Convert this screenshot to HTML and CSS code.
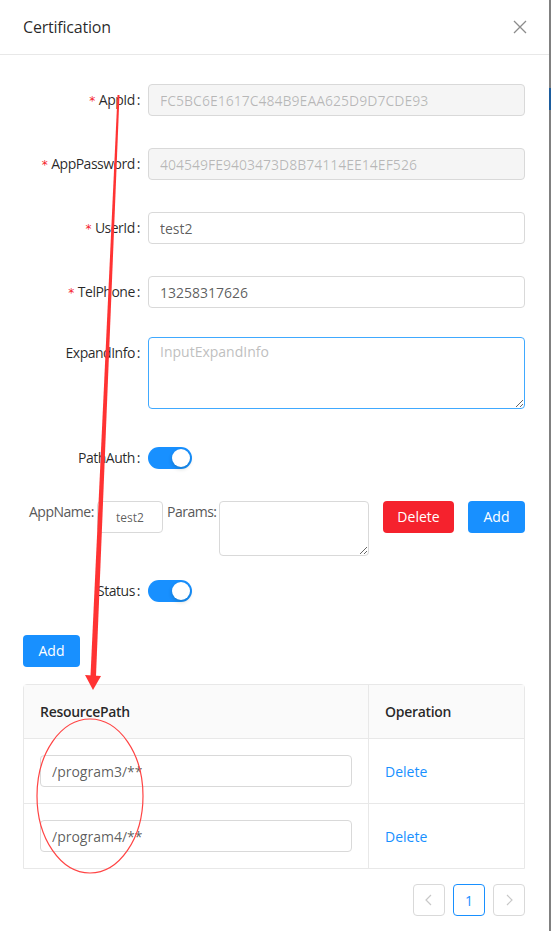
FILE: index.html
```html
<!DOCTYPE html>
<html>
<head>
<meta charset="utf-8">
<link rel="stylesheet" href="styles.css">
</head>
<body>
<div class="page">
  <div class="modal">
    <div class="modal-header">
      <div class="modal-title">Certification</div>
      <svg class="close" width="14" height="14" viewBox="0 0 14 14"><path d="M1 1L13 13M13 1L1 13" stroke="#8c8c8c" stroke-width="1.3" fill="none"/></svg>
    </div>
    <div class="modal-body">
      <div class="form-row">
        <label class="label"><span class="req">*</span>AppId<span class="colon">:</span></label>
        <input class="input disabled" value="FC5BC6E1617C484B9EAA625D9D7CDE93" disabled>
      </div>
      <div class="form-row">
        <label class="label"><span class="req">*</span>AppPassword<span class="colon">:</span></label>
        <input class="input disabled" value="404549FE9403473D8B74114EE14EF526" disabled>
      </div>
      <div class="form-row">
        <label class="label"><span class="req">*</span>UserId<span class="colon">:</span></label>
        <input class="input" value="test2">
      </div>
      <div class="form-row tel-row">
        <label class="label"><span class="req">*</span>TelPhone<span class="colon">:</span></label>
        <input class="input" value="13258317626">
      </div>
      <div class="form-row top expand-row">
        <label class="label">ExpandInfo<span class="colon">:</span></label>
        <textarea class="textarea focus" placeholder="InputExpandInfo"></textarea>
      </div>
      <div class="form-row switch-row">
        <label class="label">PathAuth<span class="colon">:</span></label>
        <span class="switch"><span class="knob"></span></span>
      </div>
      <div class="app-row">
        <span class="small-label name-label">AppName:</span>
        <input class="input small" value="test2">
        <span class="small-label params">Params:</span>
        <textarea class="textarea params-box"></textarea>
        <button class="btn danger">Delete</button>
        <button class="btn primary">Add</button>
      </div>
      <div class="form-row switch-row status-row">
        <label class="label">Status<span class="colon">:</span></label>
        <span class="switch"><span class="knob"></span></span>
      </div>
      <button class="btn primary add-main">Add</button>
      <div class="table">
        <div class="tr th">
          <div class="td c1">ResourcePath</div>
          <div class="td c2">Operation</div>
        </div>
        <div class="tr">
          <div class="td c1"><input class="input cell-input" value="/program3/**"></div>
          <div class="td c2"><a class="link">Delete</a></div>
        </div>
        <div class="tr last">
          <div class="td c1"><input class="input cell-input" value="/program4/**"></div>
          <div class="td c2"><a class="link">Delete</a></div>
        </div>
      </div>
      <div class="pager">
        <span class="pg"><svg width="10" height="12" viewBox="0 0 10 12"><path d="M7 1L2 6L7 11" stroke="#c8c8c8" stroke-width="1.2" fill="none"/></svg></span>
        <span class="pg active">1</span>
        <span class="pg"><svg width="10" height="12" viewBox="0 0 10 12"><path d="M3 1L8 6L3 11" stroke="#c8c8c8" stroke-width="1.2" fill="none"/></svg></span>
      </div>
    </div>
  </div>
  <div class="backdrop-edge"><span class="edge-blue"></span></div>
  <svg class="annot" width="551" height="931" viewBox="0 0 551 931">
    <polygon points="117.5,95 119.5,95 96,676 90.5,676" fill="#ff3333"/>
    <polygon points="85,675 101,676 93,690" fill="#ff3333"/>
    <ellipse cx="90" cy="796" rx="53" ry="77" fill="none" stroke="#ff4444" stroke-width="1.2"/>
  </svg>
</div>
</body>
</html>
```
FILE: styles.css
```css
* { box-sizing: border-box; }
html, body { margin: 0; padding: 0; }
body {
  width: 551px;
  height: 931px;
  overflow: hidden;
  font-family: "Open Sans", "Noto Sans", sans-serif;
  font-size: 14px;
  color: rgba(0,0,0,0.65);
  background: #7d7d7d;
}
.page {
  position: relative;
  display: flex;
  width: 551px;
  height: 931px;
}
.modal {
  width: 549px;
  height: 931px;
  background: #fff;
  flex: none;
}
.backdrop-edge {
  flex: 1;
  background: #808080;
  position: relative;
}
.edge-blue {
  position: absolute;
  left: 0; right: 0;
  top: 88px; height: 22px;
  background: #1d5c9c;
}
.modal-header {
  height: 55px;
  border-bottom: 1px solid #e8e8e8;
  display: flex;
  align-items: center;
  justify-content: space-between;
  padding: 0 22px 0 23px;
}
.modal-title {
  font-size: 16px;
  font-weight: 500;
  color: rgba(0,0,0,0.85);
  line-height: 22px;
  letter-spacing: -0.2px;
}
.close { display: block; }
.modal-body {
  padding: 29px 24px 0 23px;
}
.form-row {
  display: flex;
  align-items: center;
  height: 32px;
  margin-bottom: 32px;
}
.tel-row { margin-bottom: 29px; }
.form-row.top { align-items: flex-start; }
.expand-row { height: 72px; margin-bottom: 33px; }
.label {
  width: 117px;
  height: 32px;
  flex: none;
  text-align: right;
  color: rgba(0,0,0,0.85);
  margin-right: 8px;
  line-height: 32px;
  white-space: nowrap;
  letter-spacing: -0.5px;
  overflow: visible;
}
.req {
  color: #f5222d;
  margin-right: 4px;
  font-family: "DejaVu Sans", sans-serif;
  font-size: 12px;
  line-height: 1;
  vertical-align: 0;
}
.colon { margin-left: 2px; }
.input {
  flex: 1;
  height: 32px;
  border: 1px solid #d9d9d9;
  border-radius: 4px;
  padding: 4px 11px;
  font-family: inherit;
  font-size: 14px;
  color: rgba(0,0,0,0.65);
  background: #fff;
  outline: none;
  min-width: 0;
}
.input.disabled {
  background: #f5f5f5;
  color: rgba(0,0,0,0.25);
}
.textarea {
  border: 1px solid #d9d9d9;
  border-radius: 4px;
  font-family: inherit;
  font-size: 14px;
  padding: 4px 11px;
  outline: none;
  resize: vertical;
  color: rgba(0,0,0,0.65);
}
.textarea::placeholder { color: #bfbfbf; }
.form-row .textarea { flex: 1; height: 72px; }
.textarea.focus { border-color: #40a9ff; }
.switch-row { margin-bottom: 27px; }
.switch {
  width: 44px;
  height: 22px;
  border-radius: 11px;
  background: #1890ff;
  position: relative;
  display: block;
}
.knob {
  position: absolute;
  top: 2px;
  right: 2px;
  width: 18px;
  height: 18px;
  border-radius: 50%;
  background: #fff;
  box-shadow: 0 2px 4px rgba(0,35,11,0.2);
}
.app-row {
  display: flex;
  align-items: flex-start;
  padding-left: 6px;
  height: 55px;
  margin-bottom: 19px;
}
.small-label {
  color: #595959;
  line-height: 22px;
  padding-top: 0;
  letter-spacing: -0.5px;
  white-space: nowrap;
  flex: none;
}
.name-label { width: 68px; }
.params { width: 52px; margin-left: 4px; }
.input.small {
  flex: none;
  width: 66px;
  font-size: 12px;
  text-align: center;
  padding: 4px 6px;
}
.params-box {
  width: 150px;
  height: 55px;
  flex: none;
}
.btn {
  height: 32px;
  border: none;
  border-radius: 4px;
  color: #fff;
  font-family: inherit;
  font-size: 14px;
  padding: 0;
  line-height: 32px;
  text-align: center;
  flex: none;
}
.btn.danger {
  background: #f5222d;
  width: 71px;
  margin-left: 14px;
}
.app-row .btn.primary {
  width: 57px;
  margin-left: 14px;
}
.btn.primary { background: #1890ff; }
.status-row { margin-bottom: 28px; }
.add-main {
  display: block;
  width: 57px;
  margin-bottom: 17px;
}
.table {
  border: 1px solid #e8e8e8;
  border-radius: 4px 4px 0 0;
}
.tr {
  display: flex;
  border-bottom: 1px solid #e8e8e8;
}
.tr.last { border-bottom: none; }
.th {
  background: #fafafa;
  height: 54px;
  color: rgba(0,0,0,0.85);
  font-weight: 600;
  letter-spacing: -0.3px;
}
.td {
  display: flex;
  align-items: center;
  padding: 16px;
}
.c1 {
  width: 345px;
  border-right: 1px solid #e8e8e8;
}
.c2 { flex: 1; }
.th .td { padding: 0 16px; }
.cell-input { flex: 1; }
.link { color: #1890ff; }
.pager {
  display: flex;
  justify-content: flex-end;
  gap: 8px;
  margin-top: 15px;
}
.pg {
  width: 32px;
  height: 32px;
  border: 1px solid #d9d9d9;
  border-radius: 4px;
  display: flex;
  align-items: center;
  justify-content: center;
  color: rgba(0,0,0,0.65);
}
.pg.active {
  border-color: #1890ff;
  color: #1890ff;
}
.annot {
  position: absolute;
  left: 0;
  top: 0;
  pointer-events: none;
}
```
